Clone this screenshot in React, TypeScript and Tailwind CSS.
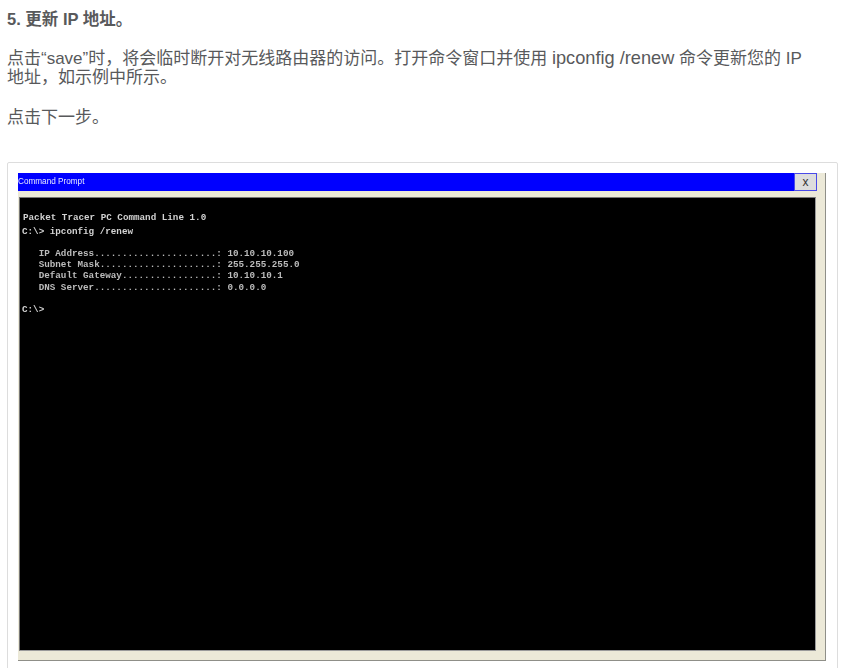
export default function App() {
  return (
    <div className="h-[668px] w-[844px] overflow-hidden bg-white pl-[7px] pr-[6px] text-[#58595b] [font-family:'Liberation_Sans','Noto_Sans_CJK_SC',sans-serif]">
      {/* Step text */}
      <h4 className="pt-[10px] text-[16.5px] leading-[19px] font-bold">5. 更新 IP 地址。</h4>
      <p className="mt-[20px] max-w-[810px] text-[17px] leading-[19px]">
        点击“save”时，将会临时断开对无线路由器的访问。打开命令窗口并使用 <span className="text-[18.2px]">ipconfig /renew</span> 命令更新您的 IP 地址，如示例中所示。
      </p>
      <p className="mt-[21px] text-[17px] leading-[19px]">点击下一步。</p>

      {/* Screenshot card */}
      <div className="mt-[35px] h-[520px] rounded-[2px] border border-[#dddddd] bg-white px-[10px] pt-[10px]">
        <div className="w-[808px] border-r border-b border-[#8f8f88] bg-[#ece9d8] pb-[9px]">
          <div className="flex h-[18px] w-[799px] items-center justify-between bg-[#0000ff] text-[8.2px] text-[#e6e9ff]">
            <span className="blur-[0.3px]">Command Prompt</span>
            <div className="flex h-[18px] w-[23px] items-center justify-center border border-[#4a4ae8] bg-[#dddddd] text-[12px] text-[#333333]">
              x
            </div>
          </div>
          <div className="ml-[1px] mt-[6px] h-[454px] w-[797px] border border-t-[#777777] border-l-[#777777] border-r-[#9a9a9a] border-b-[#9a9a9a] bg-black pt-[14px] pl-[3px] text-[9.25px] font-bold text-[#d2d2d2] [font-family:'Liberation_Mono',monospace]">
            <pre className="leading-[11px] blur-[0.4px] [font-family:inherit]">
              <div className="mb-[3px]">Packet Tracer PC Command Line 1.0</div>
              <div className="mb-[11px] -ml-[1px]">C:\&gt; ipconfig /renew</div>
              <div className="-ml-[1px] text-[#bcbcbc]">   IP Address......................: 10.10.10.100</div>
              <div className="-ml-[1px] text-[#bcbcbc]">   Subnet Mask.....................: 255.255.255.0</div>
              <div className="-ml-[1px] text-[#bcbcbc]">   Default Gateway.................: 10.10.10.1</div>
              <div className="-ml-[1px] mt-[1px] text-[#bcbcbc]">   DNS Server......................: 0.0.0.0</div>
              <div className="mt-[11px] -ml-[1px]">C:\&gt;</div>
            </pre>
          </div>
        </div>
      </div>
    </div>
  );
}
